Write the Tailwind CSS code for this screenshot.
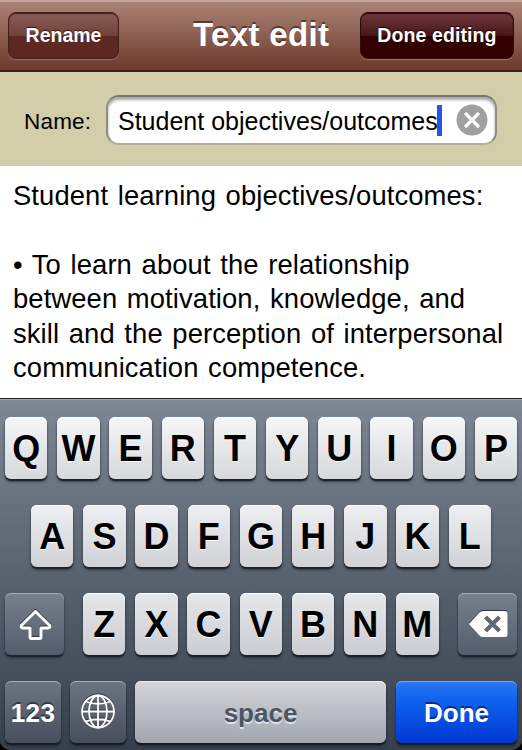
<!DOCTYPE html>
<html lang="en">
<head>
<meta charset="utf-8">
<title>Text edit</title>
<script src="https://cdn.jsdelivr.net/npm/@tailwindcss/browser@4"></script>
</head>
<body class="w-[522px] h-[750px] overflow-hidden bg-black font-['Liberation_Sans',Arial,sans-serif] text-black">
<div class="w-[522px] h-[750px] flex flex-col">
  <header class="h-[72px] shrink-0 flex items-start pl-2 pt-3 border-b-2 border-[#3a201a] bg-linear-to-b from-[#ac8679] to-[#6d3a2c] shadow-[inset_0_2px_0_#c4a49b]">
    <button class="w-[111px] h-[47px] shrink-0 rounded-[8px] border border-[#43211b] bg-[linear-gradient(to_bottom,#895e56_0%,#70423a_50%,#5d2922_51%,#5d2822_100%)] shadow-[inset_0_1px_1px_#3f1d18,0_1px_0_#9a7165] text-white text-[19.5px] font-bold leading-[45px] [text-shadow:0_-1px_1px_#331510]">Rename</button>
    <h1 class="w-[241px] pl-[74px] text-white text-[33px] font-bold leading-[46px] tracking-[0.35px] whitespace-nowrap [text-shadow:0_-2px_0_#5b3a30]">Text edit</h1>
    <button class="w-[154px] h-[47px] shrink-0 rounded-[8px] border border-[#2b0b0b] bg-[linear-gradient(to_bottom,#70393c_0%,#481619_50%,#330000_51%,#340000_100%)] shadow-[inset_0_1px_1px_#240808,0_1px_0_#9a7165] text-white text-[19.5px] tracking-[0.1px] font-bold leading-[45px] whitespace-nowrap [text-shadow:0_-1px_1px_#1a0000]">Done editing</button>
  </header>
  <section class="h-[94px] shrink-0 bg-[#d3cda9] flex items-start pl-[24px] pt-[23px]">
    <label class="w-[82px] text-[22.5px] leading-[53px] tracking-[0.2px]">Name:</label>
    <div class="w-[391px] h-[50px] rounded-[13px] bg-white border-2 border-[#8e8d80] border-t-[#77776f] border-b-[#b0ad98] shadow-[inset_0_3px_3px_#a9a9a9] flex items-center pl-[10px]">
      <span class="text-[25px] leading-[46px] whitespace-nowrap pt-px">Student objectives/outcomes</span>
      <span class="w-[5px] h-[31px] -ml-px bg-[#2455e6] shrink-0"></span>
      <svg class="ml-[14px] shrink-0" width="32" height="32" viewBox="0 0 32 32"><circle cx="16" cy="16" r="15.5" fill="#a0a0a0"/><path d="M10 10L22 22M22 10L10 22" stroke="#fff" stroke-width="3.2" stroke-linecap="round"/></svg>
    </div>
  </section>
  <main class="h-[232px] shrink-0 bg-white pl-[13px] pt-[13.4px] text-[27.4px] leading-[34.3px] [word-spacing:1.9px] tracking-[0.1px] whitespace-nowrap">
    <p>Student learning objectives/outcomes:</p>
    <p class="pt-[34.3px]">• To learn about the relationship<br>between motivation, knowledge, and<br>skill and the perception of interpersonal<br>communication competence.</p>
  </main>
  <section class="h-[352px] shrink-0 rounded-b-[10px] border-t border-[#202229] bg-linear-to-b from-[#7e8894] to-[#36404d] shadow-[inset_0_1px_0_#a1a9b1] pt-[18px] flex flex-col gap-[26px] text-[36px] font-bold leading-[64px] text-center">
    <div id="row1" class="h-[62px] pl-[5px] flex gap-[9.8px]"></div>
    <div id="row2" class="h-[62px] pl-[31px] flex gap-[9.8px]"></div>
    <div class="h-[62px] pl-[5px] flex">
      <div class="w-[59px] h-[62px] rounded-[6px] bg-linear-to-b from-[#77818d] to-[#535d6c] shadow-[inset_0_1px_0_#a5adb6,0_2px_1px_#1c222a,0_3px_3px_#1c222a99] flex items-center justify-center">
        <svg class="[filter:drop-shadow(0_-1px_0_#303844)]" width="34" height="34" viewBox="0 0 34 34"><path d="M17.500 4.500L31.500 18.200Q32.500 21 30 21H23V29.500Q23 31.500 21.500 31.500H13.500Q12 31.500 12 29.500V21H5Q2.500 21 3.500 18.200Z" fill="none" stroke="#fff" stroke-width="3" stroke-linejoin="round"/></svg>
      </div>
      <div id="row3" class="ml-[19px] w-[356px] flex gap-[9.8px]"></div>
      <div class="ml-[19px] w-[59px] h-[62px] rounded-[6px] bg-linear-to-b from-[#77818d] to-[#535d6c] shadow-[inset_0_1px_0_#a5adb6,0_2px_1px_#1c222a,0_3px_3px_#1c222a99] flex items-center justify-center">
        <svg class="[filter:drop-shadow(0_-1px_0_#303844)]" width="40" height="28" viewBox="0 0 40 28"><path d="M1 14L11.5 2.5Q13 1 15 1H37Q39.500 1 39.500 3.500V24.500Q39.500 27 37 27H15Q13 27 11.500 25.500Z" fill="#fff"/><path d="M17.500 7L31.500 21M31.500 7L17.500 21" stroke="#5f6976" stroke-width="4.2"/></svg>
      </div>
    </div>
    <div class="h-[62px] pl-[5px] flex text-[26px] leading-[64px]">
      <div class="w-[56px] rounded-[6px] bg-linear-to-b from-[#6c7582] to-[#474f5d] shadow-[inset_0_1px_0_#a5adb6,0_2px_1px_#161b22,0_3px_3px_#161b2299] text-white tracking-[0.4px] [text-shadow:0_-2px_0_#303844]">123</div>
      <div class="ml-[9px] w-[56px] rounded-[6px] bg-linear-to-b from-[#6c7582] to-[#474f5d] shadow-[inset_0_1px_0_#a5adb6,0_2px_1px_#161b22,0_3px_3px_#161b2299] flex items-center justify-center">
        <svg class="[filter:drop-shadow(0_-1px_0_#303844)]" width="36" height="36" viewBox="0 0 36 36" fill="none" stroke="#fff" stroke-width="1.8"><circle cx="18" cy="17.500" r="16"/><ellipse cx="18" cy="17.500" rx="9" ry="16"/><path d="M18 1.500V33.500M2 17.500H34M5.500 7.500Q18 12 30.500 7.500M5.500 27.500Q18 23 30.500 27.500"/></svg>
      </div>
      <div class="ml-[9px] w-[251px] rounded-[6px] bg-linear-to-b from-[#d5d6da] to-[#a1a6af] shadow-[inset_0_1px_0_#eeeff1,0_2px_1px_#161b22,0_3px_3px_#161b2299] text-[#4c5564] [text-shadow:0_2px_0_#dfe1e5]">space</div>
      <div class="ml-[10px] w-[121px] rounded-[6px] bg-[linear-gradient(to_bottom,#2878f0_0%,#0c60ed_35%,#0138d2_100%)] shadow-[inset_0_1px_0_#70a8f8,0_2px_1px_#161b22,0_3px_3px_#161b2299] text-white [text-shadow:0_-2px_0_#082b87]">Done</div>
    </div>
  </section>
</div>
<script>
  const rows = {
    row1: ['QWERTYUIOP', 'from-[#f6f6f8] to-[#d6d8db]'],
    row2: ['ASDFGHJKL', 'from-[#eeeff1] to-[#d0d2d7]'],
    row3: ['ZXCVBNM', 'from-[#e6e7ea] to-[#cbcdd3]']
  };
  for (const [id, [letters, shade]] of Object.entries(rows)) {
    document.getElementById(id).innerHTML = [...letters].map(c =>
      `<div class="w-[42.4px] h-[62px] shrink-0 rounded-[6px] bg-linear-to-b ${shade} shadow-[inset_0_1px_0_#ffffff,0_2px_1px_#1c222a,0_3px_3px_#1c222a99] [text-shadow:0_1px_0_#ffffff]">${c}</div>`).join('');
  }
</script>
</body>
</html>
